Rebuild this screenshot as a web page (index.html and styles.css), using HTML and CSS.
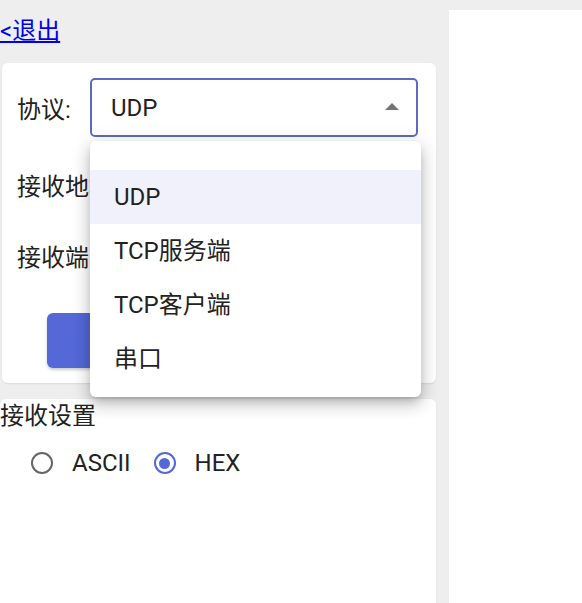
FILE: index.html
```html
<!DOCTYPE html>
<html lang="zh">
<head>
<meta charset="utf-8">
<title>接收</title>
<link rel="stylesheet" href="styles.css">
</head>
<body>
<div class="app">
  <div class="left">
    <a class="back" href="#">&lt;退出</a>
    <div class="card card-config">
      <div class="row row-proto">
        <span class="label">协议:</span>
        <div class="select-wrap">
          <div class="select">
            <span class="select-value">UDP</span>
            <span class="arrow"></span>
          </div>
          <ul class="menu">
            <li class="menu-item selected">UDP</li>
            <li class="menu-item">TCP服务端</li>
            <li class="menu-item">TCP客户端</li>
            <li class="menu-item">串口</li>
          </ul>
        </div>
      </div>
      <div class="row row-addr">
        <span class="label">接收地址:</span>
        <div class="input"></div>
      </div>
      <div class="row row-port">
        <span class="label">接收端口:</span>
        <div class="input"></div>
      </div>
      <div class="btn-row">
        <button class="btn">开始接收</button>
      </div>
    </div>
    <div class="card card-recv">
      <div class="recv-title">接收设置</div>
      <div class="radios">
        <label class="radio"><span class="circle"></span><span class="radio-text">ASCII</span></label>
        <label class="radio checked"><span class="circle"><span class="dot"></span></span><span class="radio-text">HEX</span></label>
      </div>
    </div>
  </div>
  <div class="right"></div>
</div>
</body>
</html>
```

FILE: styles.css
```css
html, body {
  margin: 0;
  padding: 0;
  height: 100%;
  background: #eeeeee;
  font-family: Roboto, "Noto Sans CJK SC", sans-serif;
  font-size: 24px;
  color: #222222;
  overflow: hidden;
}

.app {
  display: flex;
  height: 603px;
}

.left {
  width: 436px;
  flex: none;
  display: flex;
  flex-direction: column;
  padding-top: 13px;
}

.back {
  display: block;
  align-self: flex-start;
  line-height: 36px;
  color: #0000ee;
  text-decoration: underline;
}

.card {
  background: #ffffff;
  border-radius: 6px;
  box-shadow: 0 1px 2px rgba(0, 0, 0, 0.08);
}

.card-config {
  margin-top: 14px;
  margin-left: 2px;
  height: 320px;
  padding: 15px 0 0 15px;
  box-sizing: border-box;
}

.row {
  display: flex;
  align-items: center;
  height: 59px;
}

.row-addr {
  margin-top: 18px;
}

.row-port {
  margin-top: 12px;
}

.label {
  min-width: 73px;
  flex: none;
  white-space: nowrap;
}

.row-addr .label,
.row-port .label {
  margin-right: 12px;
}

.select-wrap {
  position: relative;
}

.select {
  width: 328px;
  height: 59px;
  box-sizing: border-box;
  border: 2px solid #5c6bc0;
  border-radius: 5px;
  display: flex;
  align-items: center;
  justify-content: space-between;
  padding: 0 17px 0 19px;
}

.arrow {
  width: 0;
  height: 0;
  border-left: 7px solid transparent;
  border-right: 7px solid transparent;
  border-bottom: 7px solid #757575;
  margin-top: -2px;
}

.input {
  flex: 1;
  margin-right: 18px;
  height: 59px;
  box-sizing: border-box;
  border: 1px solid #c4c4c4;
  border-radius: 5px;
}

.btn-row {
  margin-top: 28px;
  padding-left: 30px;
}

.btn {
  width: 344px;
  height: 55px;
  border: none;
  border-radius: 6px;
  background: #5468d8;
  color: #ffffff;
  font: inherit;
  box-shadow: 0 2px 3px rgba(0, 0, 0, 0.2);
}

.menu {
  position: absolute;
  top: 63px;
  left: 0;
  width: 331px;
  margin: 0;
  padding: 29px 0 11px;
  list-style: none;
  background: #ffffff;
  border-radius: 6px;
  box-shadow: 0 5px 8px -3px rgba(0, 0, 0, 0.2), 0 8px 16px 1px rgba(0, 0, 0, 0.14), 0 3px 20px 2px rgba(0, 0, 0, 0.1);
  z-index: 10;
}

.menu-item {
  height: 54px;
  line-height: 54px;
  padding-left: 24px;
  color: #222222;
}

.menu-item.selected {
  background: #f0f1fa;
}

.card-recv {
  margin-top: 16px;
  flex: 1;
  border-radius: 6px 6px 0 0;
}

.recv-title {
  line-height: 34px;
}

.radios {
  display: flex;
  align-items: center;
  padding-left: 31px;
  margin-top: 14px;
  gap: 23px;
}

.radio {
  display: flex;
  align-items: center;
  gap: 19px;
}

.circle {
  width: 22px;
  height: 22px;
  box-sizing: border-box;
  border: 2px solid #666666;
  border-radius: 50%;
  display: flex;
  align-items: center;
  justify-content: center;
}

.radio.checked .circle {
  border-color: #5468d8;
}

.dot {
  width: 11px;
  height: 11px;
  border-radius: 50%;
  background: #5468d8;
}

.radio-text {
  line-height: 32px;
}

.right {
  flex: 1;
  margin-left: 13px;
  margin-top: 10px;
  background: #ffffff;
}
```
